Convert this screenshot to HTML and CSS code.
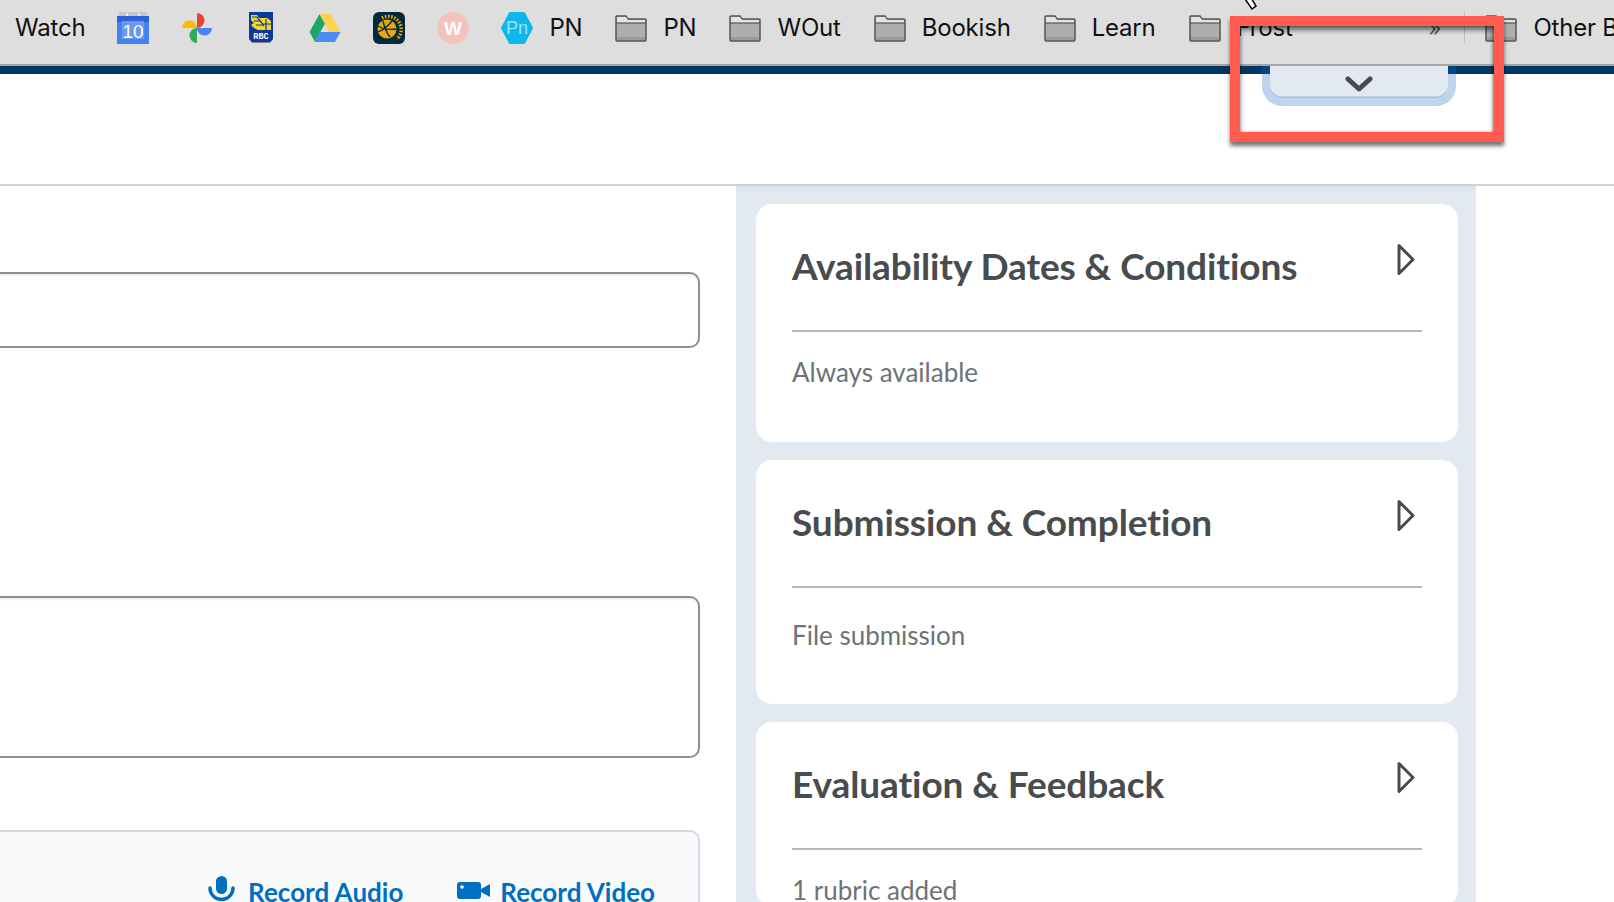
FILE: index.html
```html
<!DOCTYPE html>
<html lang="en">
<head>
<meta charset="utf-8">
<title>Edit Assignment</title>
<link rel="stylesheet" href="styles.css">
</head>
<body>
<div class="bookmarks">
  <span class="bm-text">Watch</span>
  <svg class="bm-icon" viewBox="0 0 32 32"><path fill="#c4c7cc" d="M2 0h28l1 5H1z"/><path fill="#2f62d8" d="M0 4h32v6H0z"/><path fill="#4283ec" d="M0 10h32v22H0z"/><path fill="#e9eaee" d="M9 1h2v3H9zM21 1h2v3h-2z"/><rect x="5" y="9" width="22" height="18" fill="#6c97ee"/><text class="cal-num" x="16" y="25.500" text-anchor="middle">10</text></svg>
  <svg class="bm-icon" viewBox="0 0 32 32"><path fill="#ea4335" d="M16 16V1a7.500 7.500 0 0 1 0 15z"/><path fill="#4285f4" d="M16 16h15a7.500 7.500 0 0 1-15 0z"/><path fill="#34a853" d="M16 16v15a7.500 7.500 0 0 1 0-15z"/><path fill="#fbbc04" d="M16 16H1a7.500 7.500 0 0 1 15 0z"/></svg>
  <svg class="bm-icon" viewBox="0 0 32 32"><path fill="#7d8390" d="M4 27h24l-3 4H7z"/><path fill="#0b3a9c" d="M4 0h24v27l-3 3H7l-3-3z"/><path fill="#f4d81e" d="M6 3h6l2 3h8l4 3v9H13l-4-2-3-3 3-2-3-3z"/><path fill="none" stroke="#0b3a9c" stroke-width="1.200" d="M7 5h5l5 6M9 9h6l4 5M11 13h7M21 7v11M17 12h9"/><text class="rbc" x="16" y="26.500" text-anchor="middle">RBC</text></svg>
  <svg class="bm-icon" viewBox="0 0 32 32"><path fill="#1fa463" d="M10.500 2 16 11.500 6 30 .5 20z"/><path fill="#ffd04b" d="M10.500 2h11l10 18H20.500z"/><path fill="#4c8bf5" d="M11 20h20.500L26 30H6z"/></svg>
  <svg class="bm-icon" viewBox="0 0 32 32"><rect width="32" height="32" rx="6" fill="#03293d"/><path fill="none" stroke="#e8a80c" stroke-width="3.500" stroke-dasharray="1.600 1.500" d="M9 6a13 13 0 0 1 15 21"/><circle cx="14" cy="17" r="9.500" fill="#e8a80c"/><path fill="none" stroke="#03293d" stroke-width="1.300" d="M5 20c5-2 10-6 14-11M10 9c1 5 3 11 7 16M5 14c5 3 11 4 18 3"/></svg>
  <svg class="bm-icon" viewBox="0 0 32 32"><circle cx="16" cy="16" r="16" fill="#f4c2bd"/><text class="w-mark" x="16" y="22.500" text-anchor="middle">W</text></svg>
  <span class="bm-item"><svg class="bm-icon" viewBox="0 0 32 32"><path fill="#0db7ea" stroke="#0db7ea" stroke-width="2" stroke-linejoin="round" d="M9 1h14l8 15-8 15H9L1 16z"/><text class="pn-mark" x="16" y="22" text-anchor="middle">Pn</text></svg><span class="bm-text">PN</span></span>
  <span class="bm-item"><svg class="bm-icon" viewBox="0 0 32 32"><use href="#folder"/></svg><span class="bm-text">PN</span></span>
  <span class="bm-item"><svg class="bm-icon" viewBox="0 0 32 32"><use href="#folder"/></svg><span class="bm-text">WOut</span></span>
  <span class="bm-item"><svg class="bm-icon" viewBox="0 0 32 32"><use href="#folder"/></svg><span class="bm-text">Bookish</span></span>
  <span class="bm-item"><svg class="bm-icon" viewBox="0 0 32 32"><use href="#folder"/></svg><span class="bm-text">Learn</span></span>
  <span class="bm-item"><svg class="bm-icon" viewBox="0 0 32 32"><use href="#folder"/></svg><span class="bm-text">Frost</span></span>
  <span class="bm-more">»</span>
  <span class="bm-sep"></span>
  <span class="bm-item"><svg class="bm-icon" viewBox="0 0 32 32"><use href="#folder"/></svg><span class="bm-text">Other Bookmarks</span></span>
</div>
<svg class="defs" width="0" height="0"><defs><g id="folder"><path fill="#aeaeae" stroke="#555" stroke-width="1.500" stroke-linejoin="round" d="M1 5a1 1 0 0 1 1-1h9l2 3h17a1 1 0 0 1 1 1v20a1 1 0 0 1-1 1H2a1 1 0 0 1-1-1z"/><path fill="#e4e4e4" d="M2 5h9l2 3h17v3H2z"/><path fill="none" stroke="#555" stroke-width="1.200" d="M1 11h30"/><path fill="#9b9b9b" d="M2 25h28v3H2z"/></g></defs></svg>
<div class="navy"></div>
<header class="topbar"></header>
<main class="page">
  <section class="form">
    <div class="input input-short"></div>
    <div class="input input-tall"></div>
    <div class="attach">
      <a class="attach-link"><svg class="ic-mic" viewBox="0 0 27 26"><rect x="8" y="0" width="11" height="18" rx="5.500" fill="#006fbf"/><path fill="none" stroke="#006fbf" stroke-width="3.500" stroke-linecap="round" d="M2 12a11.500 11.500 0 0 0 23 0"/></svg>Record Audio</a>
      <a class="attach-link attach-video"><svg class="ic-cam" viewBox="0 0 33 17"><rect width="24" height="17" rx="3" fill="#006fbf"/><circle cx="5" cy="5" r="1.800" fill="#fff"/><path fill="#006fbf" d="M24 7l9-5v13l-9-5z"/></svg>Record Video</a>
    </div>
  </section>
  <aside class="side">
    <article class="card card-one">
      <div class="card-head"><h2>Availability Dates &amp; Conditions</h2><svg class="caret" viewBox="0 0 18 32"><path fill="none" stroke="#494c4e" stroke-width="3" stroke-linejoin="round" d="M2 2l14 14L2 30z"/></svg></div>
      <p>Always available</p>
    </article>
    <article class="card card-two">
      <div class="card-head"><h2>Submission &amp; Completion</h2><svg class="caret" viewBox="0 0 18 32"><path fill="none" stroke="#494c4e" stroke-width="3" stroke-linejoin="round" d="M2 2l14 14L2 30z"/></svg></div>
      <p>File submission</p>
    </article>
    <article class="card card-three">
      <div class="card-head"><h2>Evaluation &amp; Feedback</h2><svg class="caret" viewBox="0 0 18 32"><path fill="none" stroke="#494c4e" stroke-width="3" stroke-linejoin="round" d="M2 2l14 14L2 30z"/></svg></div>
      <p>1 rubric added</p>
    </article>
  </aside>
</main>
<div class="tab"><svg class="chev" viewBox="0 0 28 16"><path fill="none" stroke="#494c4e" stroke-width="5" stroke-linecap="round" stroke-linejoin="round" d="M3 3l11 10L25 3"/></svg></div>
<div class="callout"></div>
<svg class="cursor" viewBox="0 0 16 12"><path fill="#fff" stroke="#000" stroke-width="1.500" d="M1-4l9 13 4-3L8-4z"/></svg>
</body>
</html>
```
FILE: styles.css
```css
* { box-sizing: border-box; }
html, body { margin: 0; height: 100%; }
body {
  position: relative;
  width: 1614px;
  height: 902px;
  overflow: hidden;
  background: #fff;
  display: flex;
  flex-direction: column;
  font-family: "Lato", sans-serif;
}
.defs { position: absolute; }

.bookmarks {
  height: 66px;
  flex: none;
  display: flex;
  align-items: center;
  gap: 32px;
  padding: 0 0 9px 15px;
  background: #dedede;
  border-bottom: 2px solid #a5a5a5;
  overflow: hidden;
  white-space: nowrap;
}
.bm-item { display: flex; align-items: center; gap: 16px; flex: none; }
.bm-item + .bm-item { margin-left: 1px; }
.bm-icon { width: 32px; height: 32px; flex: none; display: block; }
.bm-text { font: 400 24px "Inter", sans-serif; letter-spacing: -0.2px; color: #111; flex: none; }
.bm-more { margin-left: 104px; font: 400 22px "Inter", sans-serif; color: #555; flex: none; line-height: 1; }
.bm-sep { width: 1px; height: 31px; background: #bdbdbd; margin: 0 -12px 0 -9px; flex: none; }
.cal-num { font: 400 19px "Liberation Sans", sans-serif; fill: #fff; }
.rbc { font: 700 8.500px "Liberation Mono", monospace; fill: #fff; }
.w-mark { font: 700 19px "Liberation Sans", sans-serif; fill: #fff; }
.pn-mark { font: 400 18px "Liberation Sans", sans-serif; fill: #9fe3f8; }

.navy { height: 8px; flex: none; background: #003764; }
.topbar { height: 112px; flex: none; background: #fff; border-bottom: 2px solid #cdd2da; }

.page { flex: 1; min-height: 0; display: grid; grid-template-columns: 738px 738px 1fr; }

.form { padding-top: 86px; display: flex; flex-direction: column; border-right: 2px solid #d3d9e3; }
.input {
  width: 710px;
  margin-left: -10px;
  background: #fff;
  border: 2px solid #8b9095;
  border-radius: 0 10px 10px 0;
  box-shadow: inset 0 2px 2px rgba(0,0,0,.06);
}
.input-short { height: 76px; }
.input-tall { height: 162px; margin-top: 248px; }
.attach {
  width: 710px;
  flex: 1;
  margin-top: 72px;
  margin-left: -10px;
  background: #f9fafc;
  border: 2px solid #d3d9e3;
  border-bottom: 0;
  border-radius: 0 10px 0 0;
  display: flex;
  justify-content: flex-end;
  align-items: flex-start;
  gap: 54px;
  padding: 46px 43px 0 0;
}
.attach-link {
  display: flex;
  align-items: center;
  gap: 13px;
  font: 700 26px/28px "Lato", sans-serif;
  color: #006fbf;
  white-space: nowrap;
}
.attach-video { gap: 10px; }
.ic-mic { width: 27px; height: 26px; flex: none; margin-top: -6px; }
.ic-cam { width: 33px; height: 17px; flex: none; margin-top: -3px; }

.side {
  background: linear-gradient(#dde3ec, #e3e9f1 7px);
  padding: 18px 18px 0 20px;
  display: flex;
  flex-direction: column;
  gap: 18px;
  overflow: hidden;
  margin-left: -2px;
}
.card { background: #fff; border-radius: 16px; padding: 0 36px; flex: none; }
.card-one { height: 238px; }
.card-two { height: 244px; }
.card-head {
  height: 128px;
  display: flex;
  justify-content: space-between;
  align-items: flex-start;
  border-bottom: 2px solid #b5bbc1;
}
.card-head h2 {
  margin: 40px 0 0;
  font: 700 37px/44px "Lato", sans-serif;
  letter-spacing: -0.1px;
  color: #494c4e;
}
.caret { width: 18px; height: 33px; margin: 39px 7px 0 0; flex: none; }
.card p { font: 400 26px/32px "Lato", sans-serif; color: #6e7376; }
.card-one p { margin: 24px 0 0; }
.card-two p { margin: 31px 0 0; }
.card-three p { margin: 24px 0 0; }

.tab {
  position: absolute;
  left: 1262px;
  top: 66px;
  width: 194px;
  height: 40px;
  background: #e3e9f1;
  border: solid #bcd4ec;
  border-width: 0 8px 8px;
  border-radius: 0 0 20px 20px;
  box-shadow: inset 0 -1.500px 0 #a0c0e0;
  display: flex;
  justify-content: center;
  padding-top: 10px;
}
.tab::before {
  content: "";
  position: absolute;
  left: -8px;
  right: -8px;
  top: 0;
  height: 8px;
  background: linear-gradient(90deg, #00487f 8px, transparent 8px, transparent calc(100% - 8px), #00487f calc(100% - 8px));
}
.chev { width: 28px; height: 16px; }
.callout {
  position: absolute;
  left: 1230px;
  top: 16px;
  width: 274px;
  height: 126px;
  border: 10px solid #ff5b4e;
  box-shadow: 0 4px 4px rgba(0,0,0,.55), inset 0 4px 5px rgba(0,0,0,.55), inset -1px 0 3px rgba(0,0,0,.3);
}
.cursor { position: absolute; left: 1242px; top: 0; width: 16px; height: 12px; }
```
